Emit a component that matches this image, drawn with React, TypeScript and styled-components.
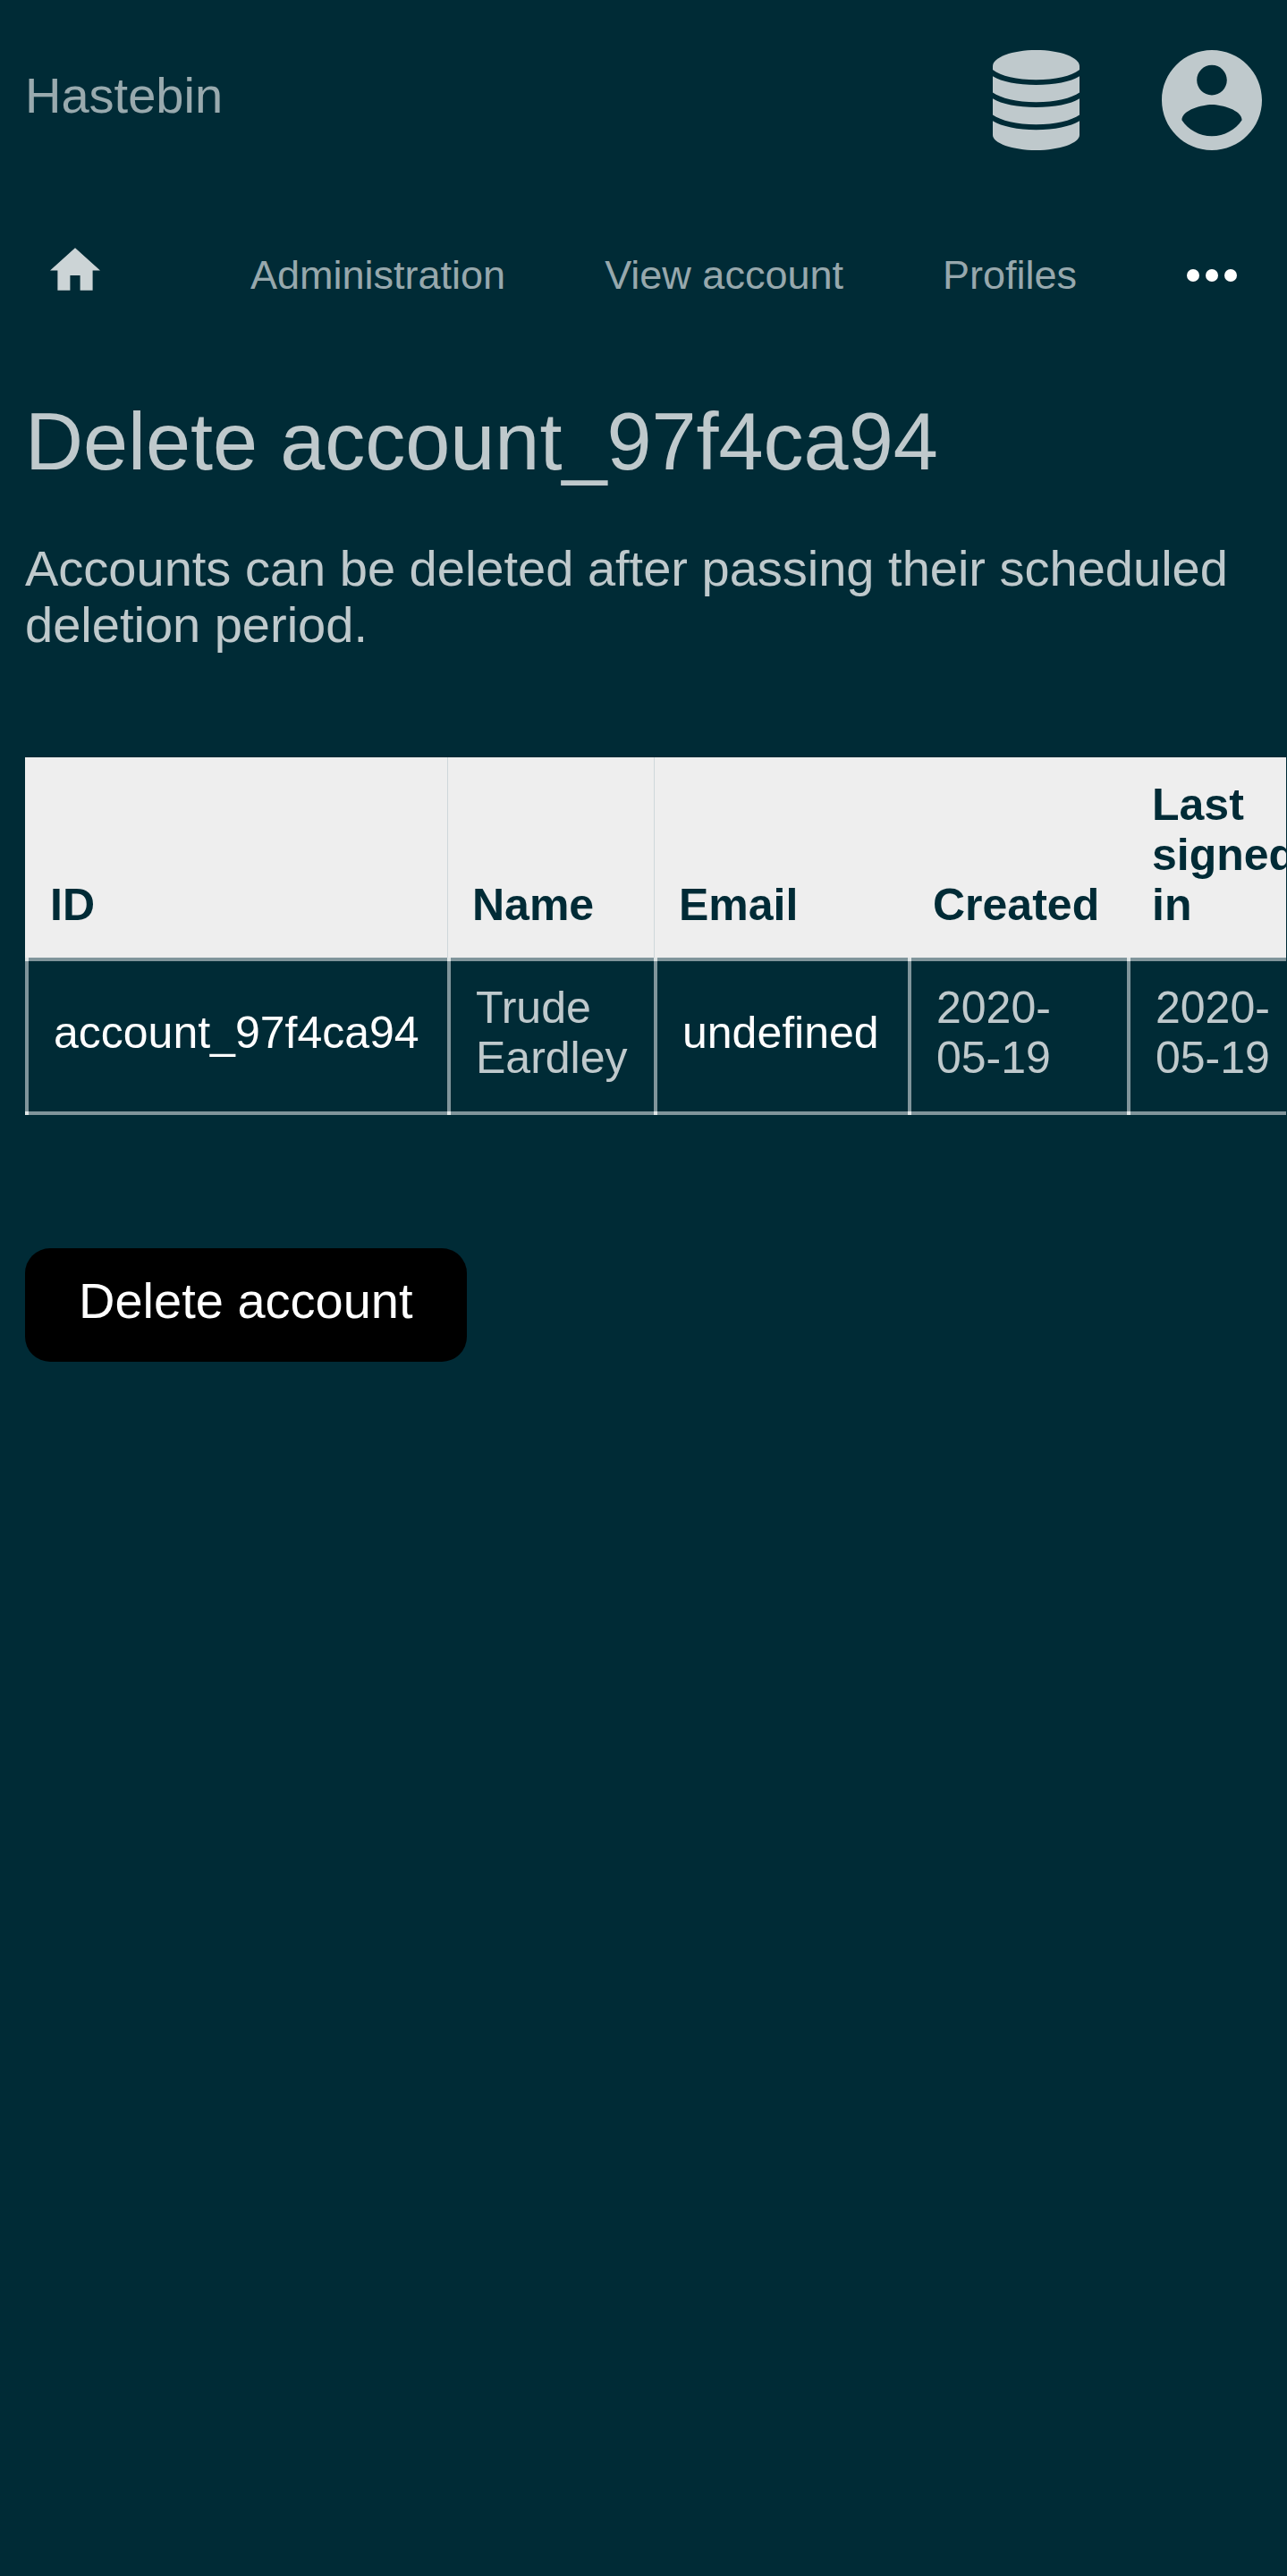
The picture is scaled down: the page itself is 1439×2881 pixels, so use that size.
import React from "react";
import styled, { createGlobalStyle } from "styled-components";

const GlobalStyle = createGlobalStyle`
  *, *::before, *::after { box-sizing: border-box; }
  body {
    margin: 0;
    background: #002b36;
    color: rgba(255, 255, 255, 0.75);
    font-family: "Liberation Sans", Arial, sans-serif;
    font-size: 56px;
    line-height: 63px;
  }
`;

const Page = styled.div`
  display: flex;
  flex-direction: column;
`;

const Header = styled.header`
  display: flex;
  align-items: center;
  justify-content: space-between;
  padding: 56px 28px;
`;

const Brand = styled.a`
  color: rgba(255, 255, 255, 0.6);
  text-decoration: none;
  padding-bottom: 12px;
`;

const HeaderActions = styled.div`
  display: flex;
  gap: 84px;
`;

const IconLink = styled.a`
  display: flex;
  justify-content: center;
  width: 112px;
  height: 112px;
  color: rgba(255, 255, 255, 0.75);
  svg { display: block; height: 100%; fill: currentColor; }
`;

const Nav = styled.nav`
  display: flex;
  align-items: center;
  gap: 56px;
  height: 56px;
  margin-top: 56px;
  padding: 0 56px;
`;

const HomeLink = styled.a`
  color: rgba(255, 255, 255, 0.8);
  padding-bottom: 14px;
  svg { display: block; width: 56px; height: 48px; fill: currentColor; }
`;

const NavList = styled.ul`
  display: flex;
  gap: 111px;
  margin: 0;
  padding: 0 0 0 112px;
  list-style: none;
`;

const NavLink = styled.a`
  display: block;
  color: rgba(255, 255, 255, 0.6);
  font-size: 45px;
  line-height: 56px;
  text-decoration: none;
  white-space: nowrap;
`;

const MoreButton = styled.button`
  margin: 0 0 0 auto;
  padding: 0;
  border: 0;
  background: none;
  color: #fff;
  svg { display: block; width: 56px; height: 14px; fill: currentColor; }
`;

const Main = styled.main`
  display: flex;
  flex-direction: column;
  align-items: flex-start;
  padding: 108px 0 56px 28px;
`;

const Title = styled.h1`
  margin: 0;
  font-size: 90px;
  font-weight: 400;
  line-height: 100px;
`;

const Lead = styled.p`
  margin: 60px 28px 0 0;
`;

const TableScroll = styled.div`
  align-self: stretch;
  margin: 117px 1px 0 0;
  overflow-x: auto;
  scrollbar-width: none;
`;

const Table = styled.table`
  width: 100%;
  border-spacing: 0;
  font-size: 50px;
  line-height: 56px;
`;

const Th = styled.th<{ $width: number; $divided?: boolean }>`
  min-width: ${(p) => p.$width}px;
  padding: 25px 28px 31px;
  background: #eee;
  box-shadow: ${(p) => (p.$divided ? "inset 1px 0 #cfd7da" : "none")};
  color: #002b36;
  text-align: left;
  vertical-align: bottom;
`;

const Td = styled.td<{ $strong?: boolean }>`
  padding: 24px 28px 32px;
  border: solid rgba(255, 255, 255, 0.5);
  border-width: 4px 0 4px 4px;
  background-image: linear-gradient(#bfcacd, #bfcacd), linear-gradient(#bfcacd, #bfcacd);
  background-origin: border-box;
  background-position: left top, left bottom;
  background-repeat: no-repeat;
  background-size: 4px 4px;
  color: ${(p) => (p.$strong ? "#fff" : "inherit")};
`;

const DeleteButton = styled.button`
  margin: 149px 0 0;
  padding: 27px 60px 37px;
  border: 0;
  border-radius: 28px;
  background: #000;
  color: #fff;
  font: inherit;
`;

const columns = [
  { label: "ID", width: 472 },
  { label: "Name", width: 231, divided: true },
  { label: "Email", width: 284, divided: true },
  { label: "Created", width: 245 },
  { label: "Last signed in", width: 224 },
];

const cells = [
  { text: "account_97f4ca94", strong: true },
  { text: "Trude Eardley" },
  { text: "undefined", strong: true },
  { text: "2020-05-19" },
  { text: "2020-05-19" },
];

const DatabaseIcon = () => (
  <svg viewBox="0 0 98 112" aria-hidden="true">
    <path d="M0 18C0 8 22 0 48.500 0S97 8 97 18v4C88 29 70 33.300 48.500 33.300S9 29 0 22z" />
    <path d="M0 29.300C10 35.500 28 39 48.500 39S87 35.500 97 29.300V47.600C88 54 70 58.300 48.500 58.300S9 54 0 47.600z" />
    <path d="M0 54.300C10 60.500 28 64 48.500 64S87 60.500 97 54.300V72.600C88 79 70 83.300 48.500 83.300S9 79 0 72.600z" />
    <path d="M0 79.300C10 85.500 28 89.200 48.500 89.200S87 85.500 97 79.300V95C97 104 75 112 48.500 112S0 104 0 95z" />
  </svg>
);

const AccountIcon = () => (
  <svg viewBox="2 2 20 20" aria-hidden="true">
    <path d="M12 2C6.480 2 2 6.480 2 12s4.480 10 10 10 10-4.480 10-10S17.520 2 12 2zm0 3c1.660 0 3 1.340 3 3s-1.340 3-3 3-3-1.340-3-3 1.340-3 3-3zm0 14.200c-2.500 0-4.710-1.280-6-3.220.03-1.990 4-3.080 6-3.080 1.990 0 5.970 1.090 6 3.080-1.290 1.940-3.500 3.220-6 3.220z" />
  </svg>
);

export default function App() {
  return (
    <Page>
      <GlobalStyle />
      <Header>
        <Brand href="#">Hastebin</Brand>
        <HeaderActions>
          <IconLink href="#" aria-label="Data"><DatabaseIcon /></IconLink>
          <IconLink href="#" aria-label="Account"><AccountIcon /></IconLink>
        </HeaderActions>
      </Header>
      <Nav>
        <HomeLink href="#" aria-label="Home">
          <svg viewBox="2 3 20 17" aria-hidden="true">
            <path d="M10 20v-6h4v6h5v-8h3L12 3 2 12h3v8z" />
          </svg>
        </HomeLink>
        <NavList>
          <li><NavLink href="#">Administration</NavLink></li>
          <li><NavLink href="#">View account</NavLink></li>
          <li><NavLink href="#">Profiles</NavLink></li>
        </NavList>
        <MoreButton type="button" aria-label="More">
          <svg viewBox="4 10 16 4" aria-hidden="true">
            <circle cx="6" cy="12" r="2" />
            <circle cx="12" cy="12" r="2" />
            <circle cx="18" cy="12" r="2" />
          </svg>
        </MoreButton>
      </Nav>
      <Main>
        <Title>Delete account_97f4ca94</Title>
        <Lead>Accounts can be deleted after passing their scheduled deletion period.</Lead>
        <TableScroll>
          <Table>
            <thead>
              <tr>
                {columns.map((c) => (
                  <Th key={c.label} scope="col" $width={c.width} $divided={c.divided}>{c.label}</Th>
                ))}
              </tr>
            </thead>
            <tbody>
              <tr>
                {cells.map((c, i) => (
                  <Td key={i} $strong={c.strong}>{c.text}</Td>
                ))}
              </tr>
            </tbody>
          </Table>
        </TableScroll>
        <DeleteButton type="button">Delete account</DeleteButton>
      </Main>
    </Page>
  );
}
